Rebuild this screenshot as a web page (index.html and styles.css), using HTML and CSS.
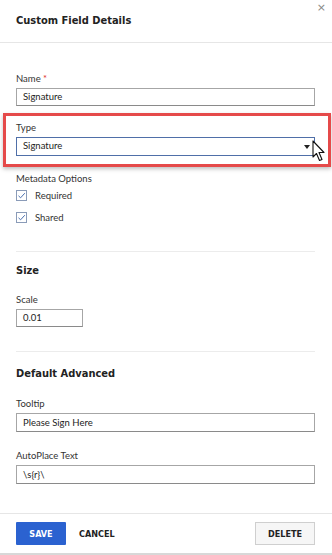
FILE: index.html
```html
<!DOCTYPE html>
<html>
<head>
<meta charset="utf-8">
<link rel="stylesheet" href="styles.css">
</head>
<body>
<div class="dialog">
  <div class="header">
    <h1 class="title">Custom Field Details</h1>
    <span class="close">&#215;</span>
  </div>
  <div class="content">
    <div class="field field-name">
      <label class="label">Name <span class="req">*</span></label>
      <div class="input">Signature</div>
    </div>
    <div class="highlight">
      <label class="label">Type</label>
      <div class="input select">Signature<span class="arrow"></span></div>
      <svg class="cursor" width="14" height="22" viewBox="0 0 14 22"><path d="M1 1 L1 17 L4.5 13.5 L7.5 20.5 L10 19.5 L7 12.5 L12 12.5 Z" fill="#fff" stroke="#111" stroke-width="1.1" stroke-linejoin="round"/></svg>
    </div>
    <div class="field field-meta">
      <label class="label">Metadata Options</label>
      <div class="check"><span class="box"><svg width="9" height="9" viewBox="0 0 9 9"><path d="M1.5 4.8 L3.6 6.8 L7.8 2.2" fill="none" stroke="#4a6fb0" stroke-width="1"/></svg></span>Required</div>
      <div class="check"><span class="box"><svg width="9" height="9" viewBox="0 0 9 9"><path d="M1.5 4.8 L3.6 6.8 L7.8 2.2" fill="none" stroke="#4a6fb0" stroke-width="1"/></svg></span>Shared</div>
    </div>
    <div class="divider div1"></div>
    <h2 class="section">Size</h2>
    <div class="field field-scale">
      <label class="label">Scale</label>
      <div class="input small">0.01</div>
    </div>
    <div class="divider div2"></div>
    <h2 class="section">Default Advanced</h2>
    <div class="field field-tooltip">
      <label class="label">Tooltip</label>
      <div class="input tall">Please Sign Here</div>
    </div>
    <div class="field field-auto">
      <label class="label">AutoPlace Text</label>
      <div class="input tall">\s{r}\</div>
    </div>
  </div>
  <div class="footer">
    <button class="btn save">SAVE</button>
    <button class="btn cancel">CANCEL</button>
    <button class="btn delete">DELETE</button>
  </div>
</div>
</body>
</html>
```
FILE: styles.css
```css
html, body {
  margin: 0;
  padding: 0;
  background: #fff;
}
.dialog {
  width: 332px;
  height: 555px;
  position: relative;
  box-sizing: border-box;
  border-bottom: 2px solid #d8d8d8;
}
.header {
  height: 43px;
  border-bottom: 1px solid #e6e6e6;
  box-sizing: border-box;
  position: relative;
}
.title {
  margin: 0;
  padding: 14px 0 0 16px;
  font-family: "DejaVu Sans Condensed", "DejaVu Sans", sans-serif;
  font-weight: bold;
  font-size: 11px;
  line-height: 14px;
  color: #222;
}
.close {
  position: absolute;
  right: 6px;
  top: 1px;
  font-family: "DejaVu Sans", sans-serif;
  font-size: 11px;
  color: #888;
}
.content {
  padding: 0 17px 0 16px;
}
.label {
  display: block;
  font-family: "Lato", "Noto Sans", sans-serif;
  font-size: 9.5px;
  line-height: 12px;
  color: #333;
  margin-bottom: 3px;
}
.req { color: #d33; }
.input {
  box-sizing: border-box;
  height: 18px;
  border: 1px solid #a6a6a6;
  border-bottom-color: #8a8a8a;
  font-family: "Lato", "Noto Sans", sans-serif;
  font-size: 9.5px;
  line-height: 16px;
  padding-left: 6px;
  color: #222;
  position: relative;
}
.input.tall { height: 19px; line-height: 17px; }
.input.small { width: 67px; }
.field-name { padding-top: 30px; }
.highlight {
  margin: 7px -16px 0 -13px;
  border: 3px solid #e54a4a;
  padding: 6px 13px 8px 10px;
  position: relative;
  box-shadow: 0 2px 4px rgba(0,0,0,0.25);
}
.select {
  border-color: #4f6fa8;
  height: 19px;
}
.arrow {
  position: absolute;
  right: 4px;
  top: 7px;
  width: 0;
  height: 0;
  border-left: 3px solid transparent;
  border-right: 3px solid transparent;
  border-top: 4px solid #222;
}
.cursor {
  position: absolute;
  right: 2px;
  top: 24px;
}
.field-meta { padding-top: 6px; }
.field-meta .label { margin-bottom: 4px; }
.check {
  display: flex;
  align-items: center;
  height: 12px;
  margin-bottom: 10px;
  font-family: "Lato", "Noto Sans", sans-serif;
  font-size: 9.5px;
  color: #333;
}
.box {
  box-sizing: border-box;
  width: 11px;
  height: 11px;
  border: 1px solid #8a9bb8;
  margin-right: 8px;
  display: flex;
  align-items: center;
  justify-content: center;
}
.divider {
  height: 1px;
  background: #ececec;
}
.div1 { margin-top: 28px; }
.section {
  margin: 0;
  font-family: "DejaVu Sans Condensed", "DejaVu Sans", sans-serif;
  font-weight: bold;
  font-size: 11px;
  line-height: 14px;
  color: #222;
}
.div1 + .section { margin-top: 12px; }
.field-scale { padding-top: 16px; }
.div2 { margin-top: 24px; }
.div2 + .section { margin-top: 15px; }
.field-tooltip { padding-top: 17px; }
.field-auto { padding-top: 18px; }
.footer {
  position: absolute;
  left: 0;
  right: 0;
  top: 513px;
  border-top: 1px solid #e6e6e6;
  padding: 8px 17px 0 16px;
  display: flex;
  align-items: center;
}
.btn {
  font-family: "DejaVu Sans Condensed", "DejaVu Sans", sans-serif;
  font-weight: bold;
  font-size: 9px;
  height: 23px;
  border: none;
  padding: 0;
  cursor: pointer;
}
.save {
  width: 50px;
  background: #2b62d0;
  color: #fff;
  border-radius: 1px;
}
.cancel {
  background: none;
  color: #222;
  margin-left: 13px;
}
.delete {
  margin-left: auto;
  width: 60px;
  background: #f6f6f6;
  border: 1px solid #cfcfcf;
  color: #222;
}
```
